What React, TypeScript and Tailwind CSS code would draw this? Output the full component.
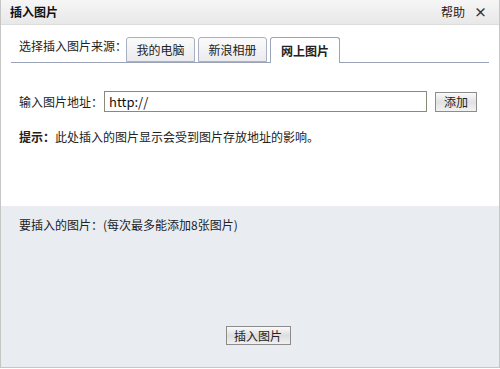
import React from "react";

const font = { fontFamily: '"Noto Sans CJK SC", "Liberation Sans", sans-serif' };

const Tab = ({ label, active }: { label: string; active?: boolean }) => (
  <div
    className={
      active
        ? "relative -mb-px flex h-[26px] w-[70px] items-center justify-center rounded-t-[3px] border border-b-0 border-[#9aa3b8] bg-white text-[12px] font-bold text-[#222]"
        : "flex h-[25px] w-[69px] items-center justify-center rounded-t-[3px] border border-[#a9b0c2] bg-gradient-to-b from-[#fbfbfb] to-[#ebebef] text-[12px] text-[#222]"
    }
  >
    {label}
  </div>
);

export default function App() {
  return (
    <div style={font} className="flex h-[369px] w-[500px] flex-col bg-white text-[12px] text-[#222]">
      <div className="flex h-[368px] flex-col border-x border-b border-[#c6c6c6]">
        <div className="flex h-[25px] items-center justify-between border-b border-[#dcdcdc] bg-gradient-to-b from-[#f6f6f6] to-[#e8e8e8] pl-[9px] pr-[12px]">
          <span className="text-[12px] font-bold text-[#111]">插入图片</span>
          <div className="flex items-center gap-[9px]">
            <span className="text-[#222]">帮助</span>
            <span className="text-[13px] font-bold text-[#333]">×</span>
          </div>
        </div>

        <div className="flex h-[181px] flex-col px-[10px]">
          <div className="mt-[12px] flex items-end gap-[3px] border-b border-[#9aa3b8] pl-[8px]">
            <span className="mb-[7px] w-[104px] whitespace-nowrap">选择插入图片来源：</span>
            <Tab label="我的电脑" />
            <Tab label="新浪相册" />
            <Tab label="网上图片" active />
          </div>

          <div className="mt-[28px] flex items-center pl-[8px]">
            <span className="w-[85px] whitespace-nowrap">输入图片地址：</span>
            <div className="flex h-[21px] w-[323px] items-center border border-[#8a8a7a] bg-white pl-[4px] text-[13px] text-[#111]">
              http://
            </div>
            <button className="ml-[8px] flex h-[20px] w-[42px] items-center justify-center border border-[#8c8c8c] bg-gradient-to-b from-[#fafafa] via-[#e2e2e2] to-[#f2f2f2] text-[12px] text-[#222]">
              添加
            </button>
          </div>

          <div className="mt-[16px] pl-[8px]">
            <span className="font-bold">提示：</span>此处插入的图片显示会受到图片存放地址的影响。
          </div>
        </div>

        <div className="flex flex-1 flex-col items-center bg-[#e9ecf1] px-[18px] pt-[10px]">
          <div className="self-start">要插入的图片：(每次最多能添加8张图片)</div>
          <button className="ml-[16px] mt-[92px] flex h-[19px] w-[65px] items-center justify-center border border-[#8c8c8c] bg-gradient-to-b from-[#fafafa] via-[#dedede] to-[#f0f0f0] text-[12px] text-[#222]">
            插入图片
          </button>
        </div>
      </div>
    </div>
  );
}
